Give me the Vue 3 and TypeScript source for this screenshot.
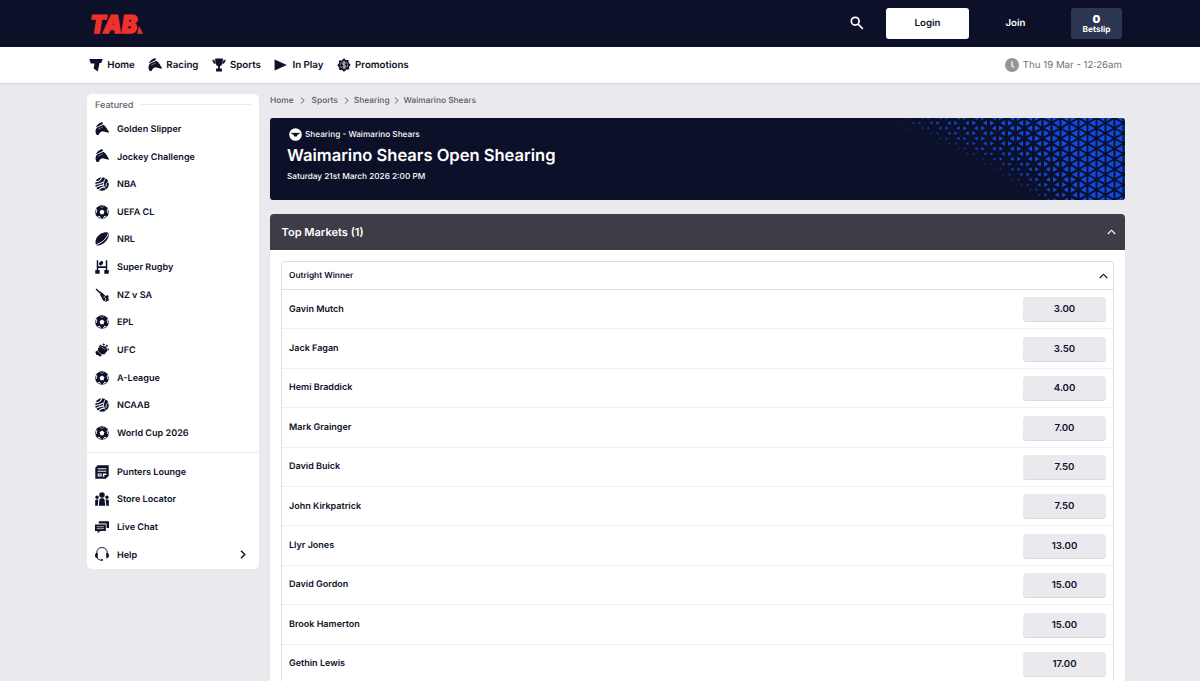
<script setup lang="ts">
interface Item { label: string; icon: string }
interface Runner { name: string; price: string }

const nav: Item[] = [
  { label: 'Home', icon: 'brand' },
  { label: 'Racing', icon: 'horse' },
  { label: 'Sports', icon: 'trophy' },
  { label: 'In Play', icon: 'play' },
  { label: 'Promotions', icon: 'promo' },
]
const featured: Item[] = [
  { label: 'Golden Slipper', icon: 'horse' },
  { label: 'Jockey Challenge', icon: 'horse' },
  { label: 'NBA', icon: 'basketball' },
  { label: 'UEFA CL', icon: 'soccer' },
  { label: 'NRL', icon: 'league' },
  { label: 'Super Rugby', icon: 'rugby' },
  { label: 'NZ v SA', icon: 'cricket' },
  { label: 'EPL', icon: 'soccer' },
  { label: 'UFC', icon: 'glove' },
  { label: 'A-League', icon: 'soccer' },
  { label: 'NCAAB', icon: 'basketball' },
  { label: 'World Cup 2026', icon: 'soccer' },
]
const support: Item[] = [
  { label: 'Punters Lounge', icon: 'news' },
  { label: 'Store Locator', icon: 'people' },
  { label: 'Live Chat', icon: 'chat' },
  { label: 'Help', icon: 'headset' },
]
const crumbs: string[] = ['Home', 'Sports', 'Shearing', 'Waimarino Shears']
const runners: Runner[] = [
  { name: 'Gavin Mutch', price: '3.00' },
  { name: 'Jack Fagan', price: '3.50' },
  { name: 'Hemi Braddick', price: '4.00' },
  { name: 'Mark Grainger', price: '7.00' },
  { name: 'David Buick', price: '7.50' },
  { name: 'John Kirkpatrick', price: '7.50' },
  { name: 'Llyr Jones', price: '13.00' },
  { name: 'David Gordon', price: '15.00' },
  { name: 'Brook Hamerton', price: '15.00' },
  { name: 'Gethin Lewis', price: '17.00' },
]

// Filled artwork per icon, on a 24 unit grid.
const icons: Record<string, string> = {
  brand: '<path d="M.5 1.500H23.500L21 8.500H18L15 23L8 18L9.500 9.500H3Z"/>',
  horse:
    '<path d="M2.500 22C.3 18.500 .3 13.500 3 10L14.500 4.500C19 8 21 12 24 17L23 18.500L16.500 16.500L12.500 16L9 17.500L5.500 22.500Z"/><path d="M1.500 8.500C4 4 8 1.500 12.500 0L13 2L14 3.200L4 8.200Z"/><path d="M5.500 12.500L13.500 8.500" stroke="#fff" stroke-width=".7"/>',
  trophy:
    '<path d="M5.500 1H18.500V4C18.500 10 17 13 13.500 14.500V18H17V23H7V18H10.500V14.500C7 13 5.500 10 5.500 4Z"/><path d="M4.500 3H0.500C1 7 2.500 9.500 6 10.500ZM19.500 3H23.500C23 7 21.500 9.500 18 10.500Z"/><path d="M2.500 4.700H5M19 4.700H21.500" stroke="#fff" stroke-width=".8"/>',
  play: '<path d="M1 2.500L22 12L1 21.500Z"/>',
  promo:
    '<path d="M12 .5L15 3.500L19.500 3.300L20 7.800L23.500 12L20.500 15L21 19.500L16.600 19.600L12 23.500L8.500 20.400L4 20.600L3.600 16.300L.5 12L3.500 8.800L3.200 4.300L8 4.200Z"/><circle cx="12" cy="12" r="6.400" fill="none" stroke="#fff" stroke-width="1" stroke-dasharray="5 1.700"/><path d="M15 9C13.500 7.500 9.500 7.500 9.500 10C9.500 12.600 15 11.400 15 14C15 16.500 10.500 16.500 9 14.700M12 6.800V17.200" fill="none" stroke="#fff" stroke-width="1.300"/>',
  basketball:
    '<circle cx="12" cy="12" r="11.700"/><g fill="none" stroke="#fff"><path stroke-width="1.800" d="M0 8C5 8.500 10 5.500 12 0M0 13C7 12.500 11 10.500 14.500 8.500M.5 18.500C7 15 11 13.500 15 13.500M5 23C8 19 12 17.300 16 17"/><path stroke-width="1.500" d="M18.500 1C15 6 14 11 15 15C16 19 18 20.500 20 21.500M24 8C20 9 18.500 12 19 17"/></g>',
  soccer:
    '<circle cx="12" cy="12" r="11.700"/><g fill="#fff"><path d="M12 7.800L16.200 10.900L14.600 15.700H9.400L7.800 10.900Z"/><path d="M8 1.500L12 3.700L16 1.500L15.500 2.700L12 4.900L8.500 2.700ZM2 6.500L4 8.500L3.300 12.700L1 14.500L.8 13.500L2.200 12ZM22 6.500L20 8.500L20.700 12.700L23 14.500L23.200 13.500L21.800 12ZM4 20L7 18.500L9.500 20.700L9.500 23.200L8.200 22.600L8 21ZM20 20L17 18.500L14.500 20.700L14.500 23.200L15.800 22.600L16 21Z"/></g>',
  league:
    '<path d="M2.200 22.500C-1.500 16 2.500 8 9 3.500C14 .3 21 -.7 23 1.500C25.500 6 21.500 14 16 18.500C11 22.500 5 24.500 2.200 22.500Z"/><path d="M2.500 21.500C10 19.500 19.500 12.500 22.700 3" fill="none" stroke="#fff" stroke-width="1.700"/>',
  rugby:
    '<path d="M3 .5H5.500V10.500H18.500V.5H21V17H23.500V23.500H16V17H18.500V13.500H5.500V17H8V23.500H.5V17H3Z"/><ellipse cx="10.500" cy="5.500" rx="4.200" ry="2.900" transform="rotate(-45 10.500 5.500)"/>',
  cricket:
    '<path d="M1 2.500L2.500 1L8 6L10.500 6.500L18 13.500L21.500 12L23.500 14L22 18L18 17L10 13.500L8 9.500Z"/><circle cx="21" cy="19.500" r="2.600"/><path d="M9 12.500L18 18L17 21.500L20.500 22.500L20 24L14 21.500Z"/><path d="M10.500 7.500L8.500 10M18 13L15 16.500" stroke="#fff" stroke-width="1"/>',
  glove:
    '<path d="M5 9L12 4.500L19 6.500L21.500 13L16 19.500L10 19L5.500 15Z"/><path d="M.5 15.500L4 12.500L12 20.500L8.500 23.500L5 20.500L2.500 20.500Z"/><path d="M6 7L9.500 2.500L11.500 3.500L8.500 7ZM13 3.500L14.500 .5L17 2L15.500 4.500ZM18 5L20.500 2.500L22.500 5L20 7ZM21.500 9L23.500 9.500L23.500 13L22 13Z"/><path d="M3.500 12.500L11 20M12 7.500L18 11" stroke="#fff" stroke-width=".9"/>',
  news:
    '<path d="M4.500 .5H23.500V18.500L18.500 23.500H.5V4.500Z"/><path d="M4.500 6.500H19.500M4.500 10.700H19.500" stroke="#fff" stroke-width="1.600"/><path d="M4.500 14.500H11.500V19.500H4.500ZM13.500 14.500H19.500V17H16V20H13.500Z" fill="#fff"/><path d="M6 17H10" stroke="currentColor" stroke-width="1.500"/>',
  people:
    '<circle cx="12" cy="5" r="4.700"/><circle cx="3.500" cy="9" r="2.900"/><circle cx="20.500" cy="9" r="2.900"/><path d="M6.500 23.500L7.500 14C8 11 9.500 10.800 12 10.800S16 11 16.500 14L17.500 23.500ZM.3 23.500V15C.3 13.200 2 12.800 5.700 13L4.700 23.500ZM23.700 23.500V15C23.700 13.200 22 12.800 18.300 13L19.300 23.500Z"/>',
  chat:
    '<path d="M6.500 2H24V13.500H19.800V6H6.500Z"/><path d="M0 7.500H18.500V19H9L4.500 22.500V19H0Z"/><path d="M3 11.500H15.500M3 14.800H15.500" stroke="#fff" stroke-width="1.100"/>',
  headset:
    '<path d="M3 14V10C3 4.500 6.500 1 12 1S21 4.500 21 10V14" fill="none" stroke="currentColor" stroke-width="1.600"/><path d="M4.700 10V19.500C1.500 19.500 .1 17.500 .1 14.700S1.500 10 4.700 10ZM19.300 10V19.500C22.500 19.500 23.900 17.500 23.900 14.700S22.500 10 19.300 10Z"/><path d="M4 19C5 21.500 8 22.500 11 22.500" fill="none" stroke="currentColor" stroke-width="1.600"/><circle cx="12" cy="22.300" r="1.700"/>',
}

// Banner halftone: a triangular lattice whose cells shrink towards the lower left.
const W = 255
const H = 82
const colW = 9
const rowH = 5.14
const lerp = (y: number, stops: [number, number][]): number => {
  for (let i = 1; i < stops.length; i++) {
    const [y0, v0] = stops[i - 1]
    const [y1, v1] = stops[i]
    if (y <= y1) return v0 + ((v1 - v0) * (y - y0)) / (y1 - y0)
  }
  return stops[stops.length - 1][1]
}
interface Cell { d: string; alpha: number }
const cells: Cell[] = []
for (let r = -1; r < 17; r++) {
  const y = 5 + r * rowH
  const start = lerp(y, [[-6, 20], [5, 20], [25, 62], [45, 110], [78, 162], [92, 176]])
  const full = lerp(y, [[-6, 190], [5, 196], [45, 216], [78, 226], [92, 228]])
  for (let c = 0; c < 30; c++) {
    if ((c + r) % 2 === 0) continue
    const x = 1.5 + c * colW
    for (const dir of [-1, 1]) {
      const cx = x + (dir * colW) / 3
      const t = Math.min(1, (cx - start) / (full - start))
      if (t <= 0.02) continue
      const s = 0.17 + 0.52 * Math.pow(t, 0.9)
      const half = rowH * s
      const base = cx - (dir * colW * s) / 3
      const tip = cx + (dir * colW * s * 2) / 3
      cells.push({
        d: `M${base.toFixed(2)} ${(y - half).toFixed(2)}V${(y + half).toFixed(2)}L${tip.toFixed(2)} ${y.toFixed(2)}Z`,
        alpha: Math.min(1, 0.3 + t * 2.8),
      })
    }
  }
}
</script>

<template>
  <div class="page">
    <header class="top">
      <svg class="logo" viewBox="0 0 54 22" aria-label="TAB">
        <text x="0" y="19.900" textLength="47" lengthAdjust="spacingAndGlyphs">TAB</text>
        <path d="M49 13L53 20.800H47.300Z" />
      </svg>
      <svg class="search" viewBox="0 0 14 14"><circle cx="5.200" cy="5.200" r="3.900" /><path d="M8 8L12.800 12.800" /></svg>
      <button class="login">Login</button>
      <a class="join">Join</a>
      <div class="slip"><b>0</b><span>Betslip</span></div>
    </header>

    <nav class="nav">
      <a v-for="n in nav" :key="n.label" class="nav-item" :class="n.icon">
        <svg class="icon" viewBox="0 0 24 24" v-html="icons[n.icon]" />
        <span>{{ n.label }}</span>
      </a>
      <div class="clock">
        <svg viewBox="0 0 14 14"><circle cx="7" cy="7" r="7" /><path d="M6.900 3.500V7.500L9 9.600" /></svg>
        <span>Thu 19 Mar - 12:26am</span>
      </div>
    </nav>

    <div class="body">
      <aside class="side">
        <div class="side-title"><span>Featured</span></div>
        <a v-for="f in featured" :key="f.label" class="side-item">
          <svg class="icon" viewBox="0 0 24 24" v-html="icons[f.icon]" />
          <span>{{ f.label }}</span>
        </a>
        <div class="rule"></div>
        <a v-for="s in support" :key="s.label" class="side-item">
          <svg class="icon" viewBox="0 0 24 24" v-html="icons[s.icon]" />
          <span>{{ s.label }}</span>
          <svg v-if="s.label === 'Help'" class="more" viewBox="0 0 6 9"><path d="M1 .8L4.800 4.500L1 8.200" /></svg>
        </a>
      </aside>

      <main class="main">
        <div class="crumbs">
          <template v-for="(c, i) in crumbs" :key="c">
            <svg v-if="i > 0" class="sep" :class="'sep' + i" viewBox="0 0 5 7"><path d="M.8 .5L4.200 3.500L.8 6.500" /></svg>
            <a>{{ c }}</a>
          </template>
        </div>

        <section class="banner">
          <svg class="halftone" :viewBox="`0 0 ${W} ${H}`"><path v-for="(c, i) in cells" :key="i" :d="c.d" :fill-opacity="c.alpha" /></svg>
          <div class="kind">
            <svg viewBox="0 0 13 13"><circle cx="6.500" cy="6.500" r="6.300" /><path d="M2 4.600L4 5.100Q6.500 4.300 9 5.100L11 4.600L10 6.300L8.600 6.500L7.900 8.600H5.100L4.400 6.500L3 6.300Z" /></svg>
            <span>Shearing - Waimarino Shears</span>
          </div>
          <h1>Waimarino Shears Open Shearing</h1>
          <p>Saturday 21st March 2026 2:00 PM</p>
        </section>

        <section class="markets">
          <div class="markets-head">
            <span>Top Markets (1)</span>
            <svg class="chev" viewBox="0 0 9 6"><path d="M.8 5L4.500 1.200L8.200 5" /></svg>
          </div>
          <div class="market">
            <div class="market-head">
              <span>Outright Winner</span>
              <svg class="chev" viewBox="0 0 9 6"><path d="M.8 5L4.500 1.200L8.200 5" /></svg>
            </div>
            <div v-for="r in runners" :key="r.name" class="row">
              <span class="name">{{ r.name }}</span>
              <button class="price">{{ r.price }}</button>
            </div>
          </div>
        </section>
      </main>
    </div>
  </div>
</template>

<style>
html,
body {
  margin: 0;
  overflow: hidden;
}
</style>

<style scoped>
.page {
  height: 681px;
  overflow: hidden;
  background: #e9e9ee;
  color: #0c1029;
  font-family: Inter, 'Liberation Sans', sans-serif;
  font-size: 9.68px;
  font-weight: 600;
  text-rendering: geometricPrecision;
}
.page * {
  box-sizing: border-box;
}
.page svg {
  display: block;
  flex: none;
}
button {
  border: 0;
  padding: 0;
  font: inherit;
  color: inherit;
  text-rendering: inherit;
}
.top {
  height: 47px;
  padding: 0 78px 0 90px;
  background: #0c1029;
  display: flex;
  align-items: center;
  color: #fff;
}
.top > :not(.logo) {
  margin-bottom: 1px;
}
.page .logo {
  width: 54px;
  height: 22px;
  fill: #f0312b;
  overflow: visible;
}
.logo text {
  font: italic 900 24.5px Inter, 'Liberation Sans', sans-serif;
  stroke: #f0312b;
  stroke-width: 1.5;
}
.search {
  width: 14px;
  height: 14px;
  margin-left: auto;
  fill: none;
  stroke: #fff;
  stroke-width: 1.7;
}
.login {
  width: 83px;
  height: 31px;
  padding-top: 1.5px;
  margin-left: 22px;
  border-radius: 3px;
  background: #fff;
  color: #0c1029;
}
.join {
  width: 93px;
  padding-top: 1.5px;
  text-align: center;
}
.slip {
  width: 51px;
  height: 31px;
  padding-top: 2px;
  margin-left: 9px;
  border-radius: 3px;
  background: #2d3650;
  display: flex;
  flex-direction: column;
  align-items: center;
  justify-content: center;
  font-size: 8.3px;
  line-height: 10.5px;
  font-weight: 700;
}
.slip b {
  font-size: 11px;
  line-height: 12px;
}
.nav {
  height: 36px;
  padding: 0 78px 1px 89px;
  background: #fff;
  box-shadow: 0 1px 1px rgba(12, 16, 41, 0.08);
  display: flex;
  align-items: center;
  position: relative;
}
.nav span {
  padding-top: 1.5px;
}
.nav-item {
  display: flex;
  align-items: center;
  gap: 4.2px;
  margin-right: 13.3px;
  font-size: 9.72px;
}
.icon {
  width: 14px;
  height: 14px;
  fill: currentColor;
}
.clock {
  margin-left: auto;
  display: flex;
  align-items: center;
  gap: 4px;
  color: #707078;
  font-weight: 400;
}
.clock svg {
  width: 14px;
  height: 14px;
  fill: #94949c;
}
.clock path {
  fill: none;
  stroke: #fff;
  stroke-width: 1.3;
}
.body {
  display: flex;
  align-items: flex-start;
  gap: 11px;
  padding: 11px 75px 0 87px;
}
.side {
  width: 172px;
  height: 475px;
  border-radius: 5px;
  background: #fff;
  font-size: 9.07px;
}
.side span {
  padding-top: 1.2px;
}
.side-title {
  height: 21px;
  padding: 0 8px;
  display: flex;
  align-items: center;
  gap: 8px;
  color: #60606a;
  font-weight: 500;
}
.side-title::after {
  content: '';
  flex: 1;
  height: 1px;
  background: #e9e9ee;
}
.side-item {
  height: 27.65px;
  padding: 0 13px 0 8px;
  display: flex;
  align-items: center;
  gap: 8px;
}
.rule {
  height: 1px;
  margin: 5px 0;
  background: #e9e9ee;
}
.more {
  width: 6px;
  height: 9px;
  margin-left: auto;
}
.more path,
.sep path,
.chev path {
  fill: none;
  stroke: currentColor;
  stroke-width: 1.4;
}
.main {
  flex: 1;
  min-width: 0;
}
.crumbs {
  height: 13px;
  margin-bottom: 11px;
  display: flex;
  align-items: center;
  color: #5c5c66;
  font-size: 8.35px;
  font-weight: 500;
}
.sep {
  width: 5px;
  height: 7px;
  margin: 0 7px 0 6px;
}
.sep path {
  stroke-width: 0.9;
}
.sep2 {
  margin: 0 5px 0 6px;
}
.sep3 {
  margin: 0 5px 0 4px;
}
.banner {
  position: relative;
  height: 82px;
  padding: 8.5px 17px 0;
  border-radius: 3px;
  overflow: hidden;
  background: #0c1029;
  color: #fff;
  font-size: 8.22px;
  font-weight: 500;
}
.halftone {
  position: absolute;
  top: 0;
  right: 0;
  width: 255px;
  height: 82px;
  fill: #1049e0;
}
.kind {
  height: 15px;
  padding-left: 1.5px;
  display: flex;
  align-items: center;
  gap: 3.5px;
}
.kind span {
  padding-top: 0.5px;
}
.kind svg {
  width: 13px;
  height: 13px;
  fill: #fff;
}
.kind path {
  fill: #0c1029;
}
.banner h1 {
  margin: 3.5px 0 0;
  font-size: 16.55px;
  line-height: 20px;
  font-weight: 600;
}
.banner p {
  margin: 5px 0 0;
  line-height: 12px;
}
.markets {
  margin-top: 14px;
  padding-bottom: 20px;
  border-radius: 4px;
  overflow: hidden;
  background: #fff;
}
.markets-head {
  height: 36px;
  padding: 0 9px 0 11.5px;
  background: #3e3d47;
  color: #fff;
  display: flex;
  align-items: center;
  justify-content: space-between;
  font-size: 11.06px;
}
.chev {
  width: 9px;
  height: 6px;
}
.chev path {
  stroke-width: 1.1;
}
.market {
  margin: 11px 11px 0;
  border: 1px solid #dcdce2;
  border-radius: 3px;
}
.market-head {
  height: 28px;
  padding: 0 5px 0 7px;
  border-bottom: 1px solid #dcdce2;
  display: flex;
  align-items: center;
  justify-content: space-between;
  font-size: 8.3px;
}
.row {
  height: 39.4px;
  padding: 0 7px;
  border-bottom: 1px solid #f0f0f4;
  display: flex;
  align-items: center;
  justify-content: space-between;
}
.name {
  font-size: 9px;
}
.price {
  width: 83px;
  height: 25px;
  margin-top: 1.5px;
  border-radius: 4px;
  background: #e9e9ee;
  box-shadow: inset 0 -1px 0 #dadae0;
  font-size: 9.68px;
}
</style>
